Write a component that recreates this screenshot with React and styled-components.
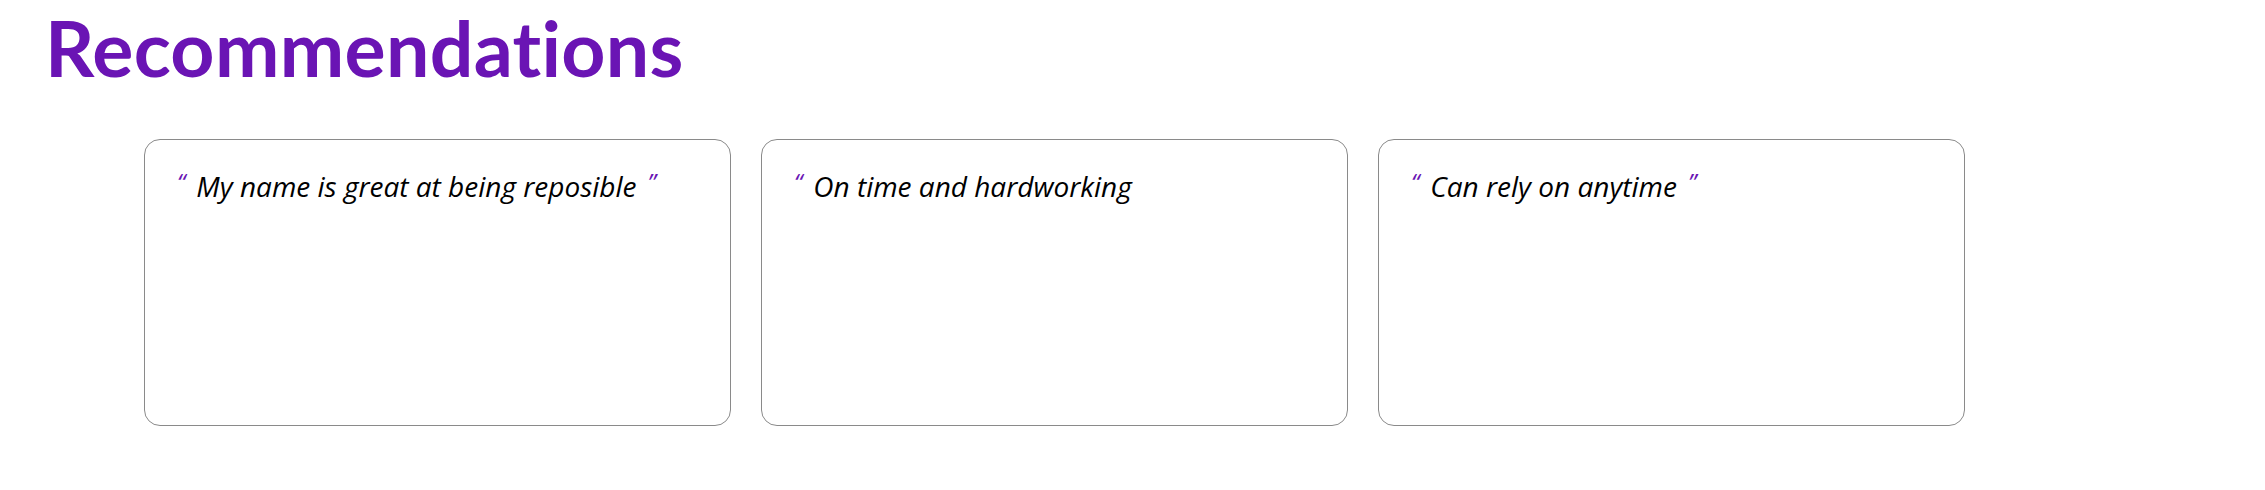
import styled, { createGlobalStyle } from 'styled-components';

const GlobalStyle = createGlobalStyle`
  body {
    margin: 0;
    background: #ffffff;
    font-family: 'Open Sans', 'Liberation Sans', sans-serif;
  }
`;

const Section = styled.section`
  padding: 0 0 0 45px;
`;

const Title = styled.h1`
  margin: 0;
  font-family: 'Lato', 'Open Sans', sans-serif;
  font-weight: 700;
  font-size: 77px;
  line-height: 94px;
  font-variant-ligatures: none;
  letter-spacing: 0.3px;
  color: #6a14b4;
`;

const CardRow = styled.div`
  display: flex;
  gap: 30px;
  margin-top: 45px;
  padding-left: 99px;
`;

const Card = styled.div`
  box-sizing: border-box;
  width: 587px;
  height: 287px;
  padding: 27px 32px;
  border: 1px solid #8a8a8a;
  border-radius: 16px;
  background: #ffffff;
`;

const QuoteText = styled.p`
  margin: 0;
  font-style: italic;
  font-size: 28px;
  line-height: 38px;
  color: #000000;
`;

const Mark = styled.span`
  color: #6a14b4;
  font-size: 24px;
  line-height: 30px;
  vertical-align: top;
  margin: ${(p) => (p.$close ? '0 0 0 11px' : '0 11px 0 0')};
`;

const recommendations = [
  { text: 'My name is great at being reposible', closed: true },
  { text: 'On time and hardworking', closed: false },
  { text: 'Can rely on anytime', closed: true },
];

export default function App() {
  return (
    <>
      <GlobalStyle />
      <Section>
        <Title>Recommendations</Title>
        <CardRow>
          {recommendations.map((r) => (
            <Card key={r.text}>
              <QuoteText>
                <Mark>“</Mark>
                {r.text}
                {r.closed && <Mark $close>”</Mark>}
              </QuoteText>
            </Card>
          ))}
        </CardRow>
      </Section>
    </>
  );
}
